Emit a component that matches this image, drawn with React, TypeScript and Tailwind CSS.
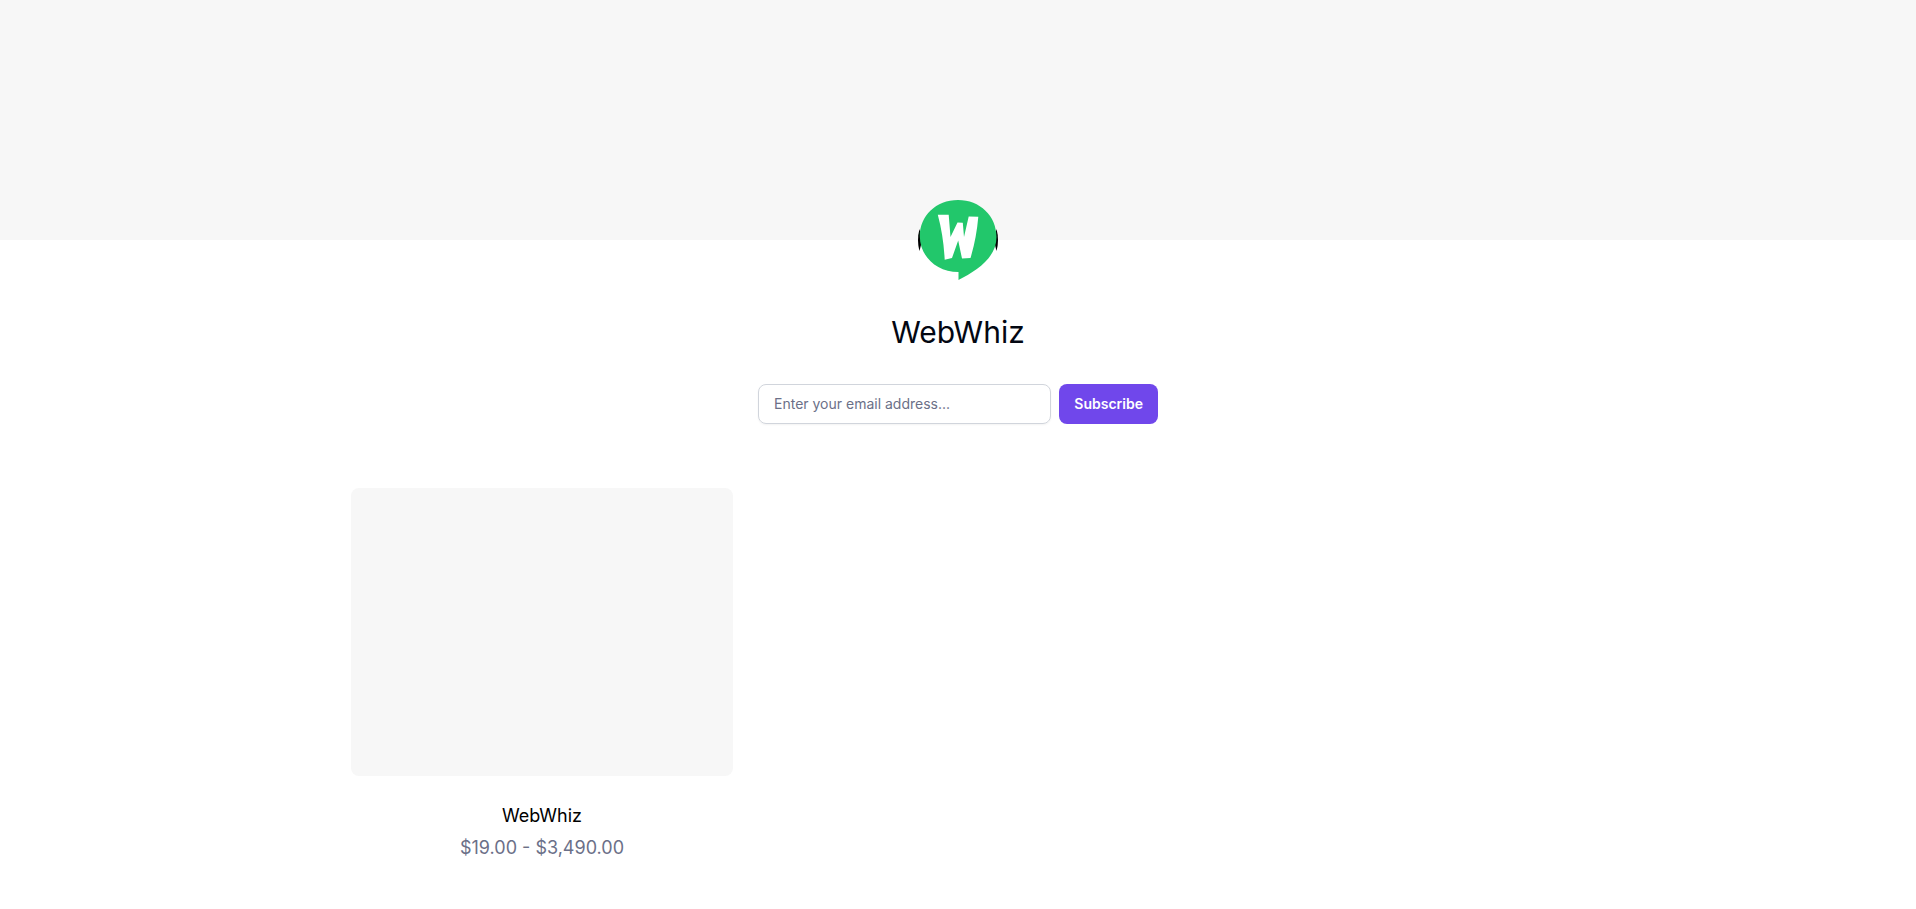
import React from 'react';

interface Product {
    name: string;
    price: string;
}

const products: Product[] = [{ name: 'WebWhiz', price: '$19.00 - $3,490.00' }];

const StoreLogo: React.FC = () => (
    <svg viewBox="0 0 80 80" className="relative h-20 w-20" role="img" aria-label="WebWhiz logo">
        <path d="M1.5 29 Q-1.5 40 1.5 51 L3 45 V35 Z" fill="#000" />
        <path d="M78.5 29 Q81.5 40 78.5 51 L77 45 V35 Z" fill="#000" />
        <path d="M40 0 C62 0 78.5 16 78.5 37 C78.5 58 58 71 40.5 80 V72 C18 72 1.8 56 1.8 36 C1.8 16 18 0 40 0 Z" fill="#22c76b" />
        <path
            d="M19.8 14.8 L30.7 14.8 L32.5 37 L39.5 22.5 L44.8 22.8 L46 37 L50.7 16.5 L60.3 16.7 Q58.5 38 52.5 58 L44 58.6 L40.2 40.5 L34 58 L26.7 59.8 Q25.5 36 19.8 14.8 Z"
            fill="#fff"
        />
    </svg>
);

const SubscribeForm: React.FC = () => (
    <form className="flex w-full max-w-[400px] gap-2" onSubmit={(e) => e.preventDefault()}>
        <input
            type="email"
            aria-label="Email address"
            placeholder="Enter your email address..."
            className="h-10 min-w-0 flex-1 rounded-lg border border-gray-300 px-[15px] pb-px text-sm shadow-xs placeholder:text-[#6b7088]"
        />
        <button type="submit" className="h-10 rounded-lg bg-[#7047eb] px-[15px] text-sm font-semibold text-white">
            Subscribe
        </button>
    </form>
);

const ProductCard: React.FC<{ product: Product }> = ({ product }) => (
    <a href="#" className="block text-center text-lg">
        <div className="mx-px h-72 rounded-lg bg-[#f7f7f7]" />
        <h2 className="mt-6 leading-8 text-black">{product.name}</h2>
        <p className="leading-8 text-[#6b7088]">{product.price}</p>
    </a>
);

const App: React.FC = () => (
    <div className="min-h-screen bg-white font-['Inter',sans-serif]">
        <div className="h-60 bg-[#f7f7f7]" />
        <header className="-mt-10 flex flex-col items-center px-4">
            <StoreLogo />
            <h1 className="mt-8 mb-8 text-3xl leading-10 text-gray-950">WebWhiz</h1>
            <SubscribeForm />
        </header>
        <main className="mx-auto mt-16 grid max-w-[1216px] gap-8 sm:grid-cols-2 lg:grid-cols-3">
            {products.map((product) => (
                <ProductCard key={product.name} product={product} />
            ))}
        </main>
    </div>
);

export default App;
